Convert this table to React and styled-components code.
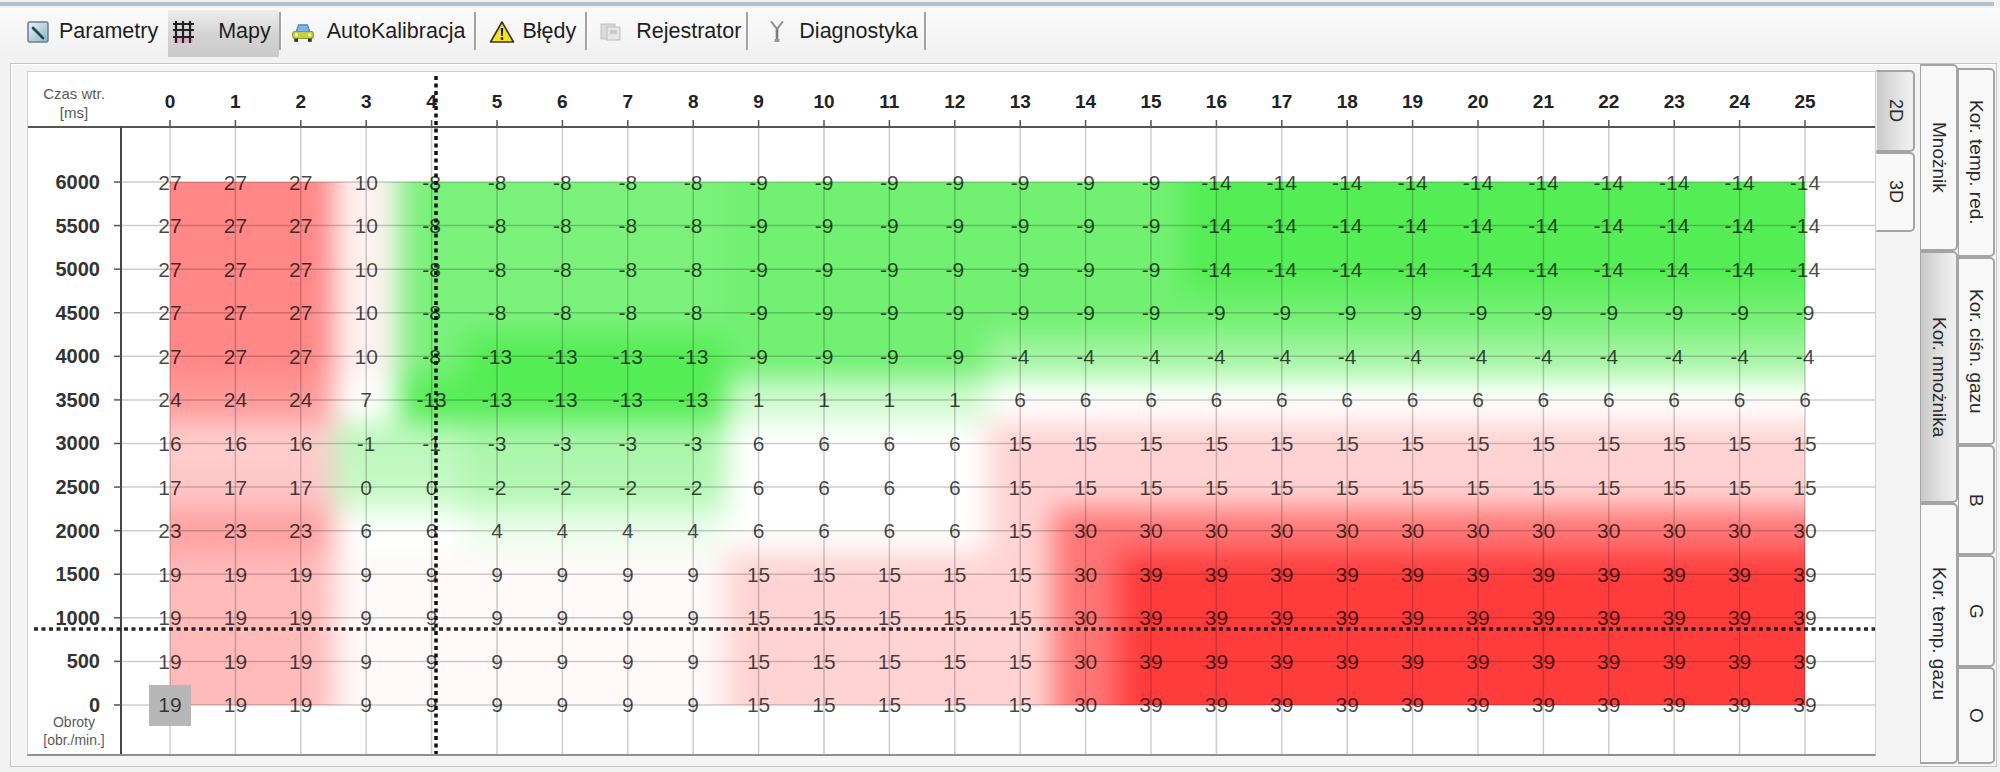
import React from 'react';
import styled, { createGlobalStyle } from 'styled-components';

const GlobalStyle = createGlobalStyle`
  html, body { margin: 0; padding: 0; }
  body {
    background: #f2f2f2;
    font-family: "Liberation Sans", Arial, sans-serif;
    color: #222;
  }
`;

const Window = styled.div`
  width: 2000px;
  height: 772px;
  display: flex;
  flex-direction: column;
  overflow: hidden;
  background: #f2f2f2;
`;

const TopLine = styled.div`
  height: 4px;
  margin: 2px 6px 0 0;
  background: #b5c0ce;
`;

const TabBar = styled.div`
  height: 49px;
  margin-top: 2px;
  display: flex;
  align-items: stretch;
  padding-left: 18px;
  background: linear-gradient(#fbfbfb, #f1f1f1);
`;

const Tab = styled.div`
  display: flex;
  align-items: center;
  margin-top: 2px;
  padding: 0 ${p => p.$pr}px 4px ${p => p.$pl}px;
  font-size: 21.5px;
  color: #1e1e1e;
  white-space: nowrap;
  background: ${p => (p.$active ? 'linear-gradient(#ededed, #d3d3d3 55%, #cacaca)' : 'transparent')};
`;

const IconSlot = styled.span`
  width: ${p => p.$w}px;
  flex-shrink: 0;
  display: flex;
  align-items: center;
`;

const Separator = styled.div`
  width: 2px;
  margin: 4px 0 7px;
  background: #a3a3a3;
  box-shadow: 1px 0 0 #fff;
`;

const TabPage = styled.div`
  flex: 1;
  margin: 6px 3px 5px 10px;
  display: flex;
  border: 1px solid #c4c4c4;
  box-shadow: inset 1px 1px 0 #fff;
  background: #f4f4f4;
`;

const ChartBox = styled.div`
  width: 1849px;
  height: 685px;
  margin: 7px 0 10px 16px;
  box-sizing: border-box;
  background: #fff;
  border: 1px solid #cfcfcf;
  border-bottom: 2px solid #8e8e8e;
  flex-shrink: 0;

  svg { display: block; }
`;

const SideArea = styled.div`
  display: flex;
  width: 120px;
`;

const TabColumn = styled.div`
  width: ${p => p.$w}px;
  margin-left: ${p => p.$ml || 0}px;
  padding: ${p => p.$top}px 0 2px;
  display: flex;
  flex-direction: column;
  box-sizing: border-box;
`;

const VTab = styled.div`
  flex: ${p => (p.$h ? `0 0 ${p.$h}px` : '1')};
  display: flex;
  align-items: center;
  justify-content: center;
  box-sizing: border-box;
  border: 2px solid #a4a4a4;
  border-left: 1px solid ${p => (p.$flush ? 'transparent' : '#a4a4a4')};
  border-radius: 0 5px 5px 0;
  background: ${p => (p.$active ? 'linear-gradient(to right, #c9c9c9, #e6e6e6 65%, #f0f0f0)' : '#f8f8f8')};
`;

const VLabel = styled.span`
  writing-mode: vertical-rl;
  font-size: ${p => p.$size || 19}px;
  color: #2a2a2a;
  white-space: nowrap;
`;

/* ---------- icons ---------- */

const ParamIcon = () => (
  <svg width="24" height="24" viewBox="0 0 24 24">
    <defs>
      <linearGradient id="pgrad" x1="0" y1="0" x2="1" y2="1">
        <stop offset="0" stopColor="#e8f2f7" />
        <stop offset="1" stopColor="#8db4c7" />
      </linearGradient>
    </defs>
    <rect x="2" y="2" width="20" height="20" rx="2" fill="url(#pgrad)" stroke="#6c7e8b" strokeWidth="1.5" />
    <path d="M7 8 L17 18" stroke="#1e4753" strokeWidth="2.6" strokeLinecap="round" />
  </svg>
);

const MapIcon = () => (
  <svg width="24" height="26" viewBox="0 0 24 26">
    <rect x="2" y="18" width="19" height="6" fill="#e6a8c9" />
    <path d="M4 2 V24 M11 2 V24 M18 2 V24 M1 5 H22 M1 11 H22 M1 18 H22" stroke="#222" strokeWidth="2.2" />
  </svg>
);

const CarIcon = () => (
  <svg width="24" height="22" viewBox="0 0 22 20">
    <path d="M4.5 10 L7 3.5 H15 L17.5 10 Z" fill="#78b6ec" stroke="#4a7fb0" strokeWidth="1" />
    <rect x="1.5" y="9.5" width="19" height="6.5" rx="2" fill="#c6cf44" stroke="#8d9a2e" strokeWidth="1" />
    <circle cx="5" cy="12.7" r="1.5" fill="#fbf6b4" />
    <circle cx="17" cy="12.7" r="1.5" fill="#fbf6b4" />
    <rect x="3" y="16" width="3.5" height="3" fill="#333" />
    <rect x="15.5" y="16" width="3.5" height="3" fill="#333" />
  </svg>
);

const WarnIcon = () => (
  <svg width="26" height="24" viewBox="0 0 26 24">
    <path d="M13 2 L24.5 22 H1.5 Z" fill="#f3e21c" stroke="#333" strokeWidth="1.6" strokeLinejoin="round" />
    <path d="M11.8 8 H14.2 L13.7 16 H12.3 Z" fill="#111" />
    <rect x="11.8" y="17.3" width="2.4" height="2.4" fill="#111" />
  </svg>
);

const RecIcon = () => (
  <svg width="24" height="22" viewBox="0 0 24 22">
    <rect x="2" y="3" width="14" height="15" fill="#d9d9d9" stroke="#c2c2c2" />
    <rect x="8" y="6" width="13" height="13" fill="#e6e6e6" stroke="#bfbfbf" />
    <rect x="11" y="9" width="7" height="4" fill="#c9c9c9" />
  </svg>
);

const DiagIcon = () => (
  <svg width="16" height="26" viewBox="0 0 16 26">
    <path d="M2.5 3 L8 10 L13.5 3" fill="none" stroke="#8a8a8a" strokeWidth="2" strokeLinecap="round" />
    <path d="M8 10 V20" stroke="#7d7d7d" strokeWidth="2.6" />
    <rect x="5.5" y="20" width="5" height="3" fill="#9a9a9a" />
  </svg>
);

const TABS = [
  { label: 'Parametry', Icon: ParamIcon, pl: 8, slot: 33, pr: 10 },
  { label: 'Mapy', Icon: MapIcon, pl: 4, slot: 46, pr: 8, active: true, sep: true },
  { label: 'AutoKalibracja', Icon: CarIcon, pl: 10, slot: 36, pr: 9, sep: true },
  { label: 'Błędy', Icon: WarnIcon, pl: 13, slot: 33, pr: 9, sep: true },
  { label: 'Rejestrator', Icon: RecIcon, pl: 12, slot: 37, pr: 5, sep: true },
  { label: 'Diagnostyka', Icon: DiagIcon, pl: 21, slot: 30, pr: 6, sep: true },
];

/* ---------- chart data ---------- */

const RPM = [6000, 5500, 5000, 4500, 4000, 3500, 3000, 2500, 2000, 1500, 1000, 500, 0];

const rep = (v, n) => Array(n).fill(v);
const top = [27, 27, 27, 10, ...rep(-8, 5), ...rep(-9, 7), ...rep(-14, 10)];
const low = [19, 19, 19, ...rep(9, 6), ...rep(15, 5), 30, ...rep(39, 11)];

const DATA = [
  top,
  top,
  top,
  [27, 27, 27, 10, ...rep(-8, 5), ...rep(-9, 17)],
  [27, 27, 27, 10, -8, ...rep(-13, 4), ...rep(-9, 4), ...rep(-4, 13)],
  [24, 24, 24, 7, ...rep(-13, 5), ...rep(1, 4), ...rep(6, 13)],
  [16, 16, 16, -1, -1, ...rep(-3, 4), ...rep(6, 4), ...rep(15, 13)],
  [17, 17, 17, 0, 0, ...rep(-2, 4), ...rep(6, 4), ...rep(15, 13)],
  [23, 23, 23, 6, 6, ...rep(4, 4), ...rep(6, 4), 15, ...rep(30, 12)],
  low,
  low,
  low,
  low,
];

const W = 1847;
const H = 682;
const X0 = 142;
const DX = 65.4;
const Y0 = 110;
const DY = 43.58;
const colX = i => X0 + i * DX;
const rowY = j => Y0 + j * DY;
const HEAD_Y = 55;
const AXIS_X = 93;

// red above the neutral band, green below it
const heat = v => {
  if (v >= 8) {
    const t = Math.min(1, (v - 8) / 31);
    const gb = Math.round(255 - t * 195);
    return `rgb(255,${gb},${gb})`;
  }
  const t = Math.min(1, Math.max(0, (6 - v) / 18));
  const rb = Math.round(255 - t * 170);
  const g = Math.round(255 - t * 18);
  return `rgb(${rb},${g},${rb})`;
};

const MapChart = () => {
  const cells = [];
  DATA.forEach((row, j) =>
    row.forEach((v, i) => {
      let x1 = colX(i) - DX / 2;
      let x2 = colX(i) + DX / 2;
      let y1 = rowY(j) - DY / 2;
      let y2 = rowY(j) + DY / 2;
      if (i === 0) x1 -= 60;
      if (i === 25) x2 += 60;
      if (j === 0) y1 -= 60;
      if (j === 12) y2 += 60;
      cells.push(
        <rect key={`c${i}-${j}`} x={x1} y={y1} width={x2 - x1 + 0.6} height={y2 - y1 + 0.6} fill={heat(v)} />
      );
    })
  );

  const cols = Array.from({ length: 26 }, (_, i) => i);

  return (
    <svg width={W} height={H} viewBox={`0 0 ${W} ${H}`} fontFamily='"Liberation Sans", Arial, sans-serif'>
      <defs>
        <filter id="soft" x="-10%" y="-10%" width="120%" height="120%" colorInterpolationFilters="sRGB">
          <feGaussianBlur stdDeviation="14" />
        </filter>
        <clipPath id="heatClip">
          <rect x={colX(0)} y={rowY(0)} width={colX(25) - colX(0)} height={rowY(12) - rowY(0)} />
        </clipPath>
      </defs>

      <g clipPath="url(#heatClip)">
        <g filter="url(#soft)">{cells}</g>
      </g>

      {/* grid */}
      {RPM.map((r, j) => (
        <line key={`h${r}`} x1={AXIS_X} x2={W} y1={rowY(j)} y2={rowY(j)} stroke="rgba(0,0,0,0.2)" strokeWidth="1.5" />
      ))}
      {cols.map(i => (
        <line key={`v${i}`} x1={colX(i)} x2={colX(i)} y1={HEAD_Y} y2={H} stroke="rgba(0,0,0,0.2)" strokeWidth="1.5" />
      ))}

      {/* axes */}
      <line x1="0" x2={W} y1={HEAD_Y} y2={HEAD_Y} stroke="#555" strokeWidth="2" />
      <line x1={AXIS_X} x2={AXIS_X} y1={HEAD_Y} y2={H} stroke="#444" strokeWidth="2" />
      {cols.map(i => (
        <line key={`t${i}`} x1={colX(i)} x2={colX(i)} y1={HEAD_Y - 7} y2={HEAD_Y} stroke="#555" strokeWidth="1.5" />
      ))}
      {RPM.map((r, j) => (
        <line key={`rt${r}`} x1={AXIS_X - 7} x2={AXIS_X} y1={rowY(j)} y2={rowY(j)} stroke="#555" strokeWidth="1.5" />
      ))}

      {/* axis labels */}
      <text x="46" y="21" textAnchor="middle" dominantBaseline="central" fontSize="15" fill="#5a5a5a">Czas wtr.</text>
      <text x="46" y="40" textAnchor="middle" dominantBaseline="central" fontSize="15" fill="#5a5a5a">[ms]</text>
      {cols.map(i => (
        <text key={`cl${i}`} x={colX(i)} y="29" textAnchor="middle" dominantBaseline="central" fontSize="19" fontWeight="bold" fill="#222">
          {i}
        </text>
      ))}
      {RPM.map((r, j) => (
        <text key={`rl${r}`} x="72" y={rowY(j)} textAnchor="end" dominantBaseline="central" fontSize="20" fontWeight="bold" fill="#333">
          {r}
        </text>
      ))}
      <text x="46" y="650" textAnchor="middle" dominantBaseline="central" fontSize="14" fill="#5a5a5a">Obroty</text>
      <text x="46" y="668" textAnchor="middle" dominantBaseline="central" fontSize="14" fill="#5a5a5a">[obr./min.]</text>

      {/* selected cell */}
      <rect x={colX(0) - 21} y={rowY(12) - 20} width="42" height="41" fill="#b7b7b7" />

      {/* values */}
      {DATA.map((row, j) =>
        row.map((v, i) => (
          <text
            key={`n${i}-${j}`}
            x={colX(i)}
            y={rowY(j)}
            textAnchor="middle"
            dominantBaseline="central"
            fontSize="21"
            fill="#000"
            fillOpacity="0.72"
          >
            {v}
          </text>
        ))
      )}

      {/* cursor */}
      <line x1="408" x2="408" y1="4" y2={H} stroke="#111" strokeWidth="3.5" strokeDasharray="4 3.5" />
      <line x1="6" x2={W} y1="557" y2="557" stroke="#111" strokeOpacity="0.9" strokeWidth="3.5" strokeDasharray="4 3.5" />
    </svg>
  );
};

export default function App() {
  return (
    <Window>
      <GlobalStyle />
      <TopLine />
      <TabBar>
        {TABS.map(({ label, Icon, pl, slot, pr, active, sep }) => (
          <React.Fragment key={label}>
            <Tab $pl={pl} $pr={pr} $active={active}>
              <IconSlot $w={slot}>
                <Icon />
              </IconSlot>
              {label}
            </Tab>
            {sep && <Separator />}
          </React.Fragment>
        ))}
      </TabBar>

      <TabPage>
        <ChartBox>
          <MapChart />
        </ChartBox>
        <SideArea>
          <TabColumn $w={39} $top={6}>
            <VTab $h={82} $active $flush>
              <VLabel $size={18}>2D</VLabel>
            </VTab>
            <VTab $h={80} $flush>
              <VLabel $size={18}>3D</VLabel>
            </VTab>
          </TabColumn>
          <TabColumn $w={38} $ml={5} $top={0}>
            <VTab $h={187}>
              <VLabel>Mnożnik</VLabel>
            </VTab>
            <VTab $h={252} $active>
              <VLabel>Kor. mnożnika</VLabel>
            </VTab>
            <VTab>
              <VLabel>Kor. temp. gazu</VLabel>
            </VTab>
          </TabColumn>
          <TabColumn $w={37} $top={4}>
            <VTab $h={189}>
              <VLabel>Kor. temp. red.</VLabel>
            </VTab>
            <VTab $h={188}>
              <VLabel>Kor. ciśn. gazu</VLabel>
            </VTab>
            <VTab $h={110}>
              <VLabel>B</VLabel>
            </VTab>
            <VTab $h={112}>
              <VLabel>G</VLabel>
            </VTab>
            <VTab>
              <VLabel>O</VLabel>
            </VTab>
          </TabColumn>
        </SideArea>
      </TabPage>
    </Window>
  );
}
